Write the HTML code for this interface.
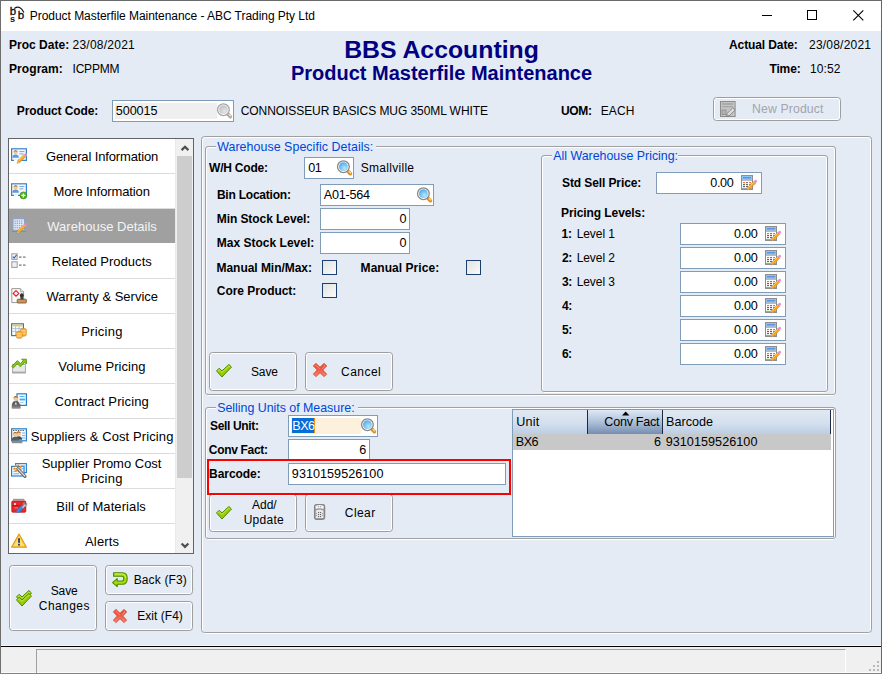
<!DOCTYPE html>
<html lang="en"><head><meta charset="utf-8"><title>Product Masterfile Maintenance</title><style>
html,body{margin:0;padding:0}
body{width:882px;height:674px;overflow:hidden;position:relative;background:#e4ebf5;font-family:"Liberation Sans",sans-serif;font-size:12px;color:#000}
.a,.t,.inp,.chk,.btn{position:absolute;box-sizing:content-box}
.t{white-space:nowrap}
.inp{border:1px solid #7f9db9;background:#fff}
.chk{border:1px solid #1c3f72;background:linear-gradient(135deg,#e2e2e0,#fafafa)}
.btn{border:1px solid #9e9e9e;border-radius:3.5px;box-shadow:inset 0 0 0 1px #fff;background:#e4ebf5}
svg{display:block;overflow:visible}
</style></head><body>
<div class="a" style="left:0;top:0;width:882px;height:1px;background:#6a6a6a"></div>
<div class="a" style="left:1px;top:1px;width:880px;height:30px;background:#fff"></div>
<svg class="a" style="left:8px;top:5px;opacity:0.999" width="20" height="20" viewBox="0 0 20 20"><text x="1.5" y="10" font-family="Liberation Mono, monospace" font-size="11.5" fill="#111" stroke="#111" stroke-width="0.35">b</text><text x="9.4" y="14" font-family="Liberation Mono, monospace" font-size="11.5" fill="#111" stroke="#111" stroke-width="0.35">b</text><text x="1.7" y="17.1" font-family="Liberation Mono, monospace" font-size="9.2" font-weight="bold" fill="#111">s</text><path d="M6.3 3.5 Q12.2 -0.6 15.9 7.6" fill="none" stroke="#111" stroke-width="1.2"/></svg>
<div class="t" style="left:29.84px;top:8px;font-size:12px;line-height:16px;letter-spacing:-0.048px;">Product Masterfile Maintenance - ABC Trading Pty Ltd</div>
<div class="a" style="left:762px;top:15px;width:10px;height:1px;background:#000"></div>
<div class="a" style="left:807px;top:10px;width:8px;height:8px;border:1px solid #000"></div>
<svg class="a" style="left:853px;top:10px;" width="11" height="11" viewBox="0 0 11 11"><path d="M0.3 0.3 L10.3 10.3 M10.3 0.3 L0.3 10.3" stroke="#000" stroke-width="1.1"/></svg>
<div class="t" style="left:9.02px;top:37px;font-size:12px;line-height:16px;letter-spacing:0.013px;font-weight:bold;">Proc Date:</div>
<div class="t" style="left:72.50px;top:37px;font-size:12px;line-height:16px;letter-spacing:0.246px;">23/08/2021</div>
<div class="t" style="left:9.02px;top:61px;font-size:12px;line-height:16px;letter-spacing:0.069px;font-weight:bold;">Program:</div>
<div class="t" style="left:72.52px;top:61px;font-size:12px;line-height:16px;letter-spacing:-0.212px;">ICPPMM</div>
<div class="t" style="left:0.00px;top:35px;font-size:24.8px;line-height:30px;font-weight:bold;color:#000080;width:883px;text-align:center;">BBS Accounting</div>
<div class="t" style="left:0.00px;top:61px;font-size:20px;line-height:24px;font-weight:bold;color:#000080;width:883px;text-align:center;">Product Masterfile Maintenance</div>
<div class="t" style="left:729.00px;top:37px;font-size:12px;line-height:16px;letter-spacing:-0.107px;font-weight:bold;">Actual Date:</div>
<div class="t" style="left:809.00px;top:37px;font-size:12px;line-height:16px;letter-spacing:0.212px;">23/08/2021</div>
<div class="t" style="left:769.38px;top:61px;font-size:12px;line-height:16px;letter-spacing:-0.102px;font-weight:bold;">Time:</div>
<div class="t" style="left:810.00px;top:61px;font-size:12px;line-height:16px;letter-spacing:0.110px;">10:52</div>
<div class="t" style="left:16.82px;top:103px;font-size:12px;line-height:16px;letter-spacing:-0.102px;font-weight:bold;">Product Code:</div>
<div class="inp" style="left:112px;top:100px;width:120px;height:20px"></div><div class="a" style="left:115px;top:103px;width:102px;height:16px;background:#efefef"></div>
<div class="t" style="left:115.80px;top:103px;font-size:12.6px;line-height:16px;letter-spacing:-0.083px;">500015</div>
<svg class="a" style="left:217px;top:103px;" width="16" height="16" viewBox="0 0 16 16"><radialGradient id="lg217103" cx="0.62" cy="0.68" r="0.75"><stop offset="0" stop-color="#e2e4e8"/><stop offset="1" stop-color="#bcbfc4"/></radialGradient><path d="M10.8 11 L13.4 13.7" stroke="#b4aca0" stroke-width="3.6" stroke-linecap="round"/><path d="M12 11.4 L13.6 13" stroke="#e8e4dc" stroke-width="1.1" stroke-linecap="round"/><circle cx="6.4" cy="6.7" r="5.85" fill="#fff" stroke="#a6a6a6" stroke-width="1.35"/><circle cx="6.4" cy="6.7" r="4.4" fill="url(#lg217103)"/></svg>
<div class="t" style="left:240.70px;top:103px;font-size:12px;line-height:16px;letter-spacing:-0.069px;">CONNOISSEUR BASICS MUG 350ML WHITE</div>
<div class="t" style="left:561.08px;top:103px;font-size:12px;line-height:16px;letter-spacing:-0.373px;font-weight:bold;">UOM:</div>
<div class="t" style="left:600.74px;top:103px;font-size:12px;line-height:16px;letter-spacing:0.097px;">EACH</div>
<div class="btn" style="left:713px;top:97px;width:126px;height:22px;"></div>
<svg class="a" style="left:720px;top:100.5px;" width="16" height="16" viewBox="0 0 16 16"><rect x="0.5" y="0.5" width="14.6" height="15" fill="#c4c4c4" stroke="#8c8c8c"/><rect x="2" y="2.4" width="11" height="1.2" fill="#9a9a9a"/><rect x="2" y="5" width="11" height="1.2" fill="#a6a6a6"/><rect x="2" y="9" width="4" height="4.6" fill="#b4b4b4" stroke="#8c8c8c" stroke-width="0.8"/><path d="M6.6 15 L7.2 12.4 L12.8 6.8 L15.2 9 L9.4 14.6 Z" fill="#dcdcdc" stroke="#777" stroke-width="0.8"/></svg>
<div class="t" style="left:752.02px;top:101px;font-size:12.3px;line-height:16px;letter-spacing:0.103px;color:#a4a4a9;">New Product</div>
<div class="a" style="left:8px;top:138px;width:184px;height:414px;border:1px solid #646464;background:#fff;overflow:hidden" id="side">
<div class="a" style="left:0;top:0px;width:166px;height:34px;border-bottom:1px solid #dcdcdc;"></div>
<svg class="a" style="left:2px;top:9px" width="16" height="16" viewBox="0 0 16 16"><rect x="0.6" y="0.8" width="14.8" height="11.6" fill="#f2f8fe" stroke="#3a82c8" stroke-width="1.2"/><circle cx="4.6" cy="4.4" r="2.07" fill="#f3c79a"/><path d="M2.2599999999999993 3.8600000000000003 Q4.6 0.43999999999999995 6.9399999999999995 3.8600000000000003 Q4.6 2.6000000000000005 2.2599999999999993 3.8600000000000003Z" fill="#9a5a1c"/><path d="M1.3599999999999994 9.8 Q1.3599999999999994 6.5600000000000005 4.6 6.5600000000000005 Q7.84 6.5600000000000005 7.84 9.8Z" fill="#5a9ae0"/><rect x="8.4" y="3" width="5" height="1.1" fill="#7aaee6"/><rect x="8.4" y="5.4" width="4" height="1" fill="#a0a0a0"/><path d="M3 11.4 H7 V13 H3Z" fill="#fff"/><g transform="translate(0,0)"><path d="M6.1 15.3 L6.9 12.6 L12.9 6.6 L14.8 8.5 L8.8 14.5 Z" fill="#f7a21b" stroke="#c9781a" stroke-width="0.5"/><path d="M7.6 12.8 L13.2 7.3" stroke="#ffd468" stroke-width="0.9"/><path d="M12.9 6.6 L14 5.5 Q14.9 4.8 15.7 5.6 Q16.4 6.4 15.8 7.4 L14.8 8.5 Z" fill="#e88ad2"/><path d="M12.5 7 L14.4 8.9" stroke="#c4c4c4" stroke-width="0.9"/><path d="M6.1 15.3 L6.7 13.2 L8.2 14.7 Z" fill="#ecd0a8"/><path d="M6.1 15.3 L6.35 14.4 L7 15.05Z" fill="#555"/></g></svg>
<div class="t" style="left:36.95px;top:10px;font-size:13px;line-height:16px;letter-spacing:-0.140px;">General Information</div>
<div class="a" style="left:0;top:35px;width:166px;height:34px;border-bottom:1px solid #dcdcdc;"></div>
<svg class="a" style="left:2px;top:44px" width="16" height="16" viewBox="0 0 16 16"><rect x="0.6" y="0.8" width="14.8" height="11.6" fill="#f2f8fe" stroke="#3a82c8" stroke-width="1.2"/><circle cx="4.6" cy="4.4" r="2.07" fill="#f3c79a"/><path d="M2.2599999999999993 3.8600000000000003 Q4.6 0.43999999999999995 6.9399999999999995 3.8600000000000003 Q4.6 2.6000000000000005 2.2599999999999993 3.8600000000000003Z" fill="#9a5a1c"/><path d="M1.3599999999999994 9.8 Q1.3599999999999994 6.5600000000000005 4.6 6.5600000000000005 Q7.84 6.5600000000000005 7.84 9.8Z" fill="#5a9ae0"/><rect x="8.4" y="3" width="5" height="1.1" fill="#7aaee6"/><rect x="8.4" y="5.4" width="4" height="1" fill="#a0a0a0"/><path d="M3 11.4 H7 V13 H3Z" fill="#fff"/><circle cx="12.4" cy="12.4" r="3.5" fill="#4fb31c" stroke="#2e8a0a" stroke-width="0.6"/><path d="M12.4 10.4 V14.4 M10.4 12.4 H14.4" stroke="#fff" stroke-width="1.4"/></svg>
<div class="t" style="left:44.46px;top:45px;font-size:13px;line-height:16px;letter-spacing:-0.120px;">More Information</div>
<div class="a" style="left:0;top:70px;width:166px;height:34px;border-bottom:1px solid #fff;background:#a0a0a0;"></div>
<svg class="a" style="left:2px;top:79px" width="16" height="16" viewBox="0 0 16 16"><path d="M0.4 13.8 Q2 11.6 4 12.4 H12 Q14 11.6 15.6 13.8Z" fill="#6aaa2a"/><rect x="2" y="0.8" width="11.4" height="11.4" fill="#e8eef8" stroke="#7f9fd0" stroke-width="1"/><rect x="3.4" y="2.4" width="1.4" height="1.4" fill="#8fa8dc"/><rect x="3.4" y="4.6" width="1.4" height="1.4" fill="#8fa8dc"/><rect x="3.4" y="6.800000000000001" width="1.4" height="1.4" fill="#8fa8dc"/><rect x="3.4" y="9.0" width="1.4" height="1.4" fill="#8fa8dc"/><rect x="5.6" y="2.4" width="1.4" height="1.4" fill="#8fa8dc"/><rect x="5.6" y="4.6" width="1.4" height="1.4" fill="#8fa8dc"/><rect x="5.6" y="6.800000000000001" width="1.4" height="1.4" fill="#8fa8dc"/><rect x="5.6" y="9.0" width="1.4" height="1.4" fill="#8fa8dc"/><rect x="7.800000000000001" y="2.4" width="1.4" height="1.4" fill="#8fa8dc"/><rect x="7.800000000000001" y="4.6" width="1.4" height="1.4" fill="#8fa8dc"/><rect x="7.800000000000001" y="6.800000000000001" width="1.4" height="1.4" fill="#8fa8dc"/><rect x="7.800000000000001" y="9.0" width="1.4" height="1.4" fill="#8fa8dc"/><rect x="10.0" y="2.4" width="1.4" height="1.4" fill="#8fa8dc"/><rect x="10.0" y="4.6" width="1.4" height="1.4" fill="#8fa8dc"/><rect x="10.0" y="6.800000000000001" width="1.4" height="1.4" fill="#8fa8dc"/><rect x="10.0" y="9.0" width="1.4" height="1.4" fill="#8fa8dc"/><g transform="translate(0,0)"><path d="M6.1 15.3 L6.9 12.6 L12.9 6.6 L14.8 8.5 L8.8 14.5 Z" fill="#f7a21b" stroke="#c9781a" stroke-width="0.5"/><path d="M7.6 12.8 L13.2 7.3" stroke="#ffd468" stroke-width="0.9"/><path d="M12.9 6.6 L14 5.5 Q14.9 4.8 15.7 5.6 Q16.4 6.4 15.8 7.4 L14.8 8.5 Z" fill="#e88ad2"/><path d="M12.5 7 L14.4 8.9" stroke="#c4c4c4" stroke-width="0.9"/><path d="M6.1 15.3 L6.7 13.2 L8.2 14.7 Z" fill="#ecd0a8"/><path d="M6.1 15.3 L6.35 14.4 L7 15.05Z" fill="#555"/></g></svg>
<div class="t" style="left:38.27px;top:80px;font-size:13px;line-height:16px;letter-spacing:0.014px;color:#f4f4f4;">Warehouse Details</div>
<div class="a" style="left:0;top:105px;width:166px;height:34px;border-bottom:1px solid #dcdcdc;"></div>
<svg class="a" style="left:2px;top:114px" width="16" height="16" viewBox="0 0 16 16"><rect x="0.8" y="0.8" width="5.4" height="5.6" fill="#f4f4f4" stroke="#9a9a9a"/><path d="M1.8 3.6 L3.2 5 L5.6 1.8" stroke="#2a6ae0" stroke-width="1.2" fill="none"/><rect x="0.8" y="8.8" width="5.4" height="5.6" fill="#f0f0f4" stroke="#9a9a9a"/><rect x="8" y="3.4" width="2.6" height="1.4" fill="#8a8a8a"/><rect x="12" y="3.4" width="2.6" height="1.4" fill="#8a8a8a"/><rect x="8" y="11.4" width="2.6" height="1.4" fill="#8a8a8a"/><rect x="12" y="11.4" width="2.6" height="1.4" fill="#8a8a8a"/></svg>
<div class="t" style="left:42.76px;top:115px;font-size:13px;line-height:16px;letter-spacing:0.019px;">Related Products</div>
<div class="a" style="left:0;top:140px;width:166px;height:34px;border-bottom:1px solid #dcdcdc;"></div>
<svg class="a" style="left:2px;top:149px" width="16" height="16" viewBox="0 0 16 16"><path d="M0.8 0.6 H9.4 L12.6 3.8 V14.6 H0.8Z" fill="#fafafa" stroke="#9a9a9a"/><path d="M9.4 0.6 V3.8 H12.6" fill="#e8e8e8" stroke="#9a9a9a" stroke-width="0.8"/><path d="M5 2.6 L7.8 5.4 L5 8.2 L2.2 5.4Z" fill="none" stroke="#e02020" stroke-width="1.1"/><rect x="6.2" y="11.2" width="9.2" height="3.8" rx="0.8" fill="#c8955a" stroke="#7a5226" stroke-width="0.8"/><rect x="9.4" y="7.6" width="2.8" height="4" fill="#444"/><circle cx="10.8" cy="7.2" r="1.9" fill="#333"/></svg>
<div class="t" style="left:37.47px;top:150px;font-size:13px;line-height:16px;letter-spacing:0.006px;">Warranty &amp; Service</div>
<div class="a" style="left:0;top:175px;width:166px;height:34px;border-bottom:1px solid #dcdcdc;"></div>
<svg class="a" style="left:2px;top:184px" width="16" height="16" viewBox="0 0 16 16"><rect x="0.6" y="0.8" width="11.8" height="11.8" fill="#fff" stroke="#2a80c8" stroke-width="1.2"/><rect x="1.4" y="1.6" width="10.2" height="1.8" fill="#f6c640"/><path d="M1.4 5.6 H11.6 M1.4 8.4 H11.6 M4.6 3.4 V12 M8 3.4 V12" stroke="#9abce0" stroke-width="0.9"/><rect x="9.6" y="5.6" width="5.8" height="7.4" rx="1.6" fill="#f9b040" stroke="#d8861a" stroke-width="0.7"/><path d="M9.8 8 H15.2 M9.8 10.4 H15.2" stroke="#fde0a0" stroke-width="0.9"/><rect x="5.4" y="8.6" width="5.8" height="6.6" rx="1.6" fill="#f9b040" stroke="#d8861a" stroke-width="0.7"/><path d="M5.6 10.8 H11 M5.6 13 H11" stroke="#fde0a0" stroke-width="0.9"/></svg>
<div class="t" style="left:72.16px;top:185px;font-size:13px;line-height:16px;letter-spacing:0.256px;">Pricing</div>
<div class="a" style="left:0;top:210px;width:166px;height:34px;border-bottom:1px solid #dcdcdc;"></div>
<svg class="a" style="left:2px;top:219px" width="16" height="16" viewBox="0 0 16 16"><rect x="1.6" y="6.4" width="12.8" height="8.6" fill="#fcfcfc" stroke="#a8a8a8"/><path d="M2 9 H14 M2 11 H14 M2 13 H14" stroke="#cfcfcf" stroke-width="0.9"/><rect x="1.6" y="13.6" width="12.8" height="1.4" fill="#a8a8a8"/><path d="M0.8 8.4 L6.4 2.6 L9.4 5.6 L12.2 2.8 L10.6 1.2 H15.4 V6 L13.8 4.4 L9.4 8.8 L6.4 5.8 L2.6 9.8 Z" fill="#8cc818" stroke="#4e8c00" stroke-width="0.8" stroke-linejoin="round"/></svg>
<div class="t" style="left:49.17px;top:220px;font-size:13px;line-height:16px;letter-spacing:0.041px;">Volume Pricing</div>
<div class="a" style="left:0;top:245px;width:166px;height:34px;border-bottom:1px solid #dcdcdc;"></div>
<svg class="a" style="left:2px;top:254px" width="16" height="16" viewBox="0 0 16 16"><rect x="6" y="0.8" width="9.4" height="11.6" fill="#f4faff" stroke="#2a80c8" stroke-width="1.2"/><rect x="8.6" y="3" width="5" height="1" fill="#58b8f0"/><rect x="8.6" y="5.6" width="5.4" height="1.8" fill="#38b0f0"/><rect x="8.6" y="9" width="4" height="0.9" fill="#a8c8e8"/><circle cx="4.8" cy="5.6" r="2.415" fill="#f3c79a"/><path d="M2.0699999999999994 4.97 Q4.8 0.9799999999999986 7.53 4.97 Q4.8 3.4999999999999996 2.0699999999999994 4.97Z" fill="#9a5a1c"/><path d="M1.0199999999999996 11.9 Q1.0199999999999996 8.12 4.8 8.12 Q8.58 8.12 8.58 11.9Z" fill="#5a5a5a"/><rect x="0.8" y="11" width="8.6" height="4.4" fill="#6a6a6a"/><path d="M4.9 8.4 L4 11.4 H5.8Z" fill="#fff"/><rect x="0.8" y="13.6" width="8.6" height="1.8" fill="#8a8a8a"/></svg>
<div class="t" style="left:45.55px;top:255px;font-size:13px;line-height:16px;letter-spacing:0.120px;">Contract Pricing</div>
<div class="a" style="left:0;top:280px;width:166px;height:34px;border-bottom:1px solid #dcdcdc;"></div>
<svg class="a" style="left:2px;top:289px" width="16" height="16" viewBox="0 0 16 16"><rect x="0.6" y="0.8" width="14.8" height="12" fill="#f4faff" stroke="#2a80c8" stroke-width="1.2"/><path d="M2 2.4 H14" stroke="#555" stroke-width="1" stroke-dasharray="1.4 1"/><path d="M11 5 H14 M11 7.6 H14 M11 10 H14" stroke="#7ab0e8" stroke-width="1"/><circle cx="7.6" cy="5.8" r="2.3" fill="#f3c79a"/><path d="M5.0 5.2 Q7.6 1.3999999999999995 10.2 5.2 Q7.6 3.8 5.0 5.2Z" fill="#9a5a1c"/><path d="M3.9999999999999996 11.8 Q3.9999999999999996 8.2 7.6 8.2 Q11.2 8.2 11.2 11.8Z" fill="#4a4a4a"/><circle cx="4.2" cy="6.4" r="2.3" fill="#f3c79a"/><path d="M1.6 5.800000000000001 Q4.2 2.0 6.800000000000001 5.800000000000001 Q4.2 4.4 1.6 5.800000000000001Z" fill="#9a5a1c"/><path d="M0.6000000000000001 12.4 Q0.6000000000000001 8.8 4.2 8.8 Q7.800000000000001 8.8 7.800000000000001 12.4Z" fill="#5c5c5c"/><rect x="0.8" y="13" width="10.6" height="2.2" fill="#8a8a8a"/></svg>
<div class="t" style="left:21.81px;top:290px;font-size:13px;line-height:16px;letter-spacing:0.105px;">Suppliers &amp; Cost Pricing</div>
<div class="a" style="left:0;top:315px;width:166px;height:34px;border-bottom:1px solid #dcdcdc;"></div>
<svg class="a" style="left:2px;top:324px" width="16" height="16" viewBox="0 0 16 16"><rect x="4.6" y="0.6" width="10.8" height="9" fill="#eef6fe" stroke="#2a80c8" stroke-width="1.1"/><rect x="0.6" y="3.4" width="12.4" height="9.6" fill="#f4faff" stroke="#2a80c8" stroke-width="1.2"/><path d="M2.4 6 H5 M2.4 8.4 H5 M2.4 10.8 H8 M10 3 H14 M10.6 5.6 H14" stroke="#6ab0ec" stroke-width="1"/><circle cx="6.6" cy="5.4" r="3" fill="none" stroke="#f78a14" stroke-width="2" stroke-dasharray="1.7 1"/><path d="M6.8 5.8 L14 13.4" stroke="#6a6a6a" stroke-width="3.2" stroke-linecap="round"/><path d="M6.8 5.6 L13.8 13" stroke="#d8d8d8" stroke-width="1.3" stroke-linecap="round"/></svg>
<div class="t" style="left:32.71px;top:317px;font-size:13px;line-height:16px;letter-spacing:-0.010px;">Supplier Promo Cost</div>
<div class="t" style="left:72.16px;top:332px;font-size:13px;line-height:16px;letter-spacing:0.256px;">Pricing</div>
<div class="a" style="left:0;top:350px;width:166px;height:34px;border-bottom:1px solid #dcdcdc;"></div>
<svg class="a" style="left:2px;top:359px" width="16" height="16" viewBox="0 0 16 16"><rect x="2" y="0.8" width="11.4" height="1.6" fill="#9a9a9a"/><rect x="0.8" y="3" width="14" height="11.2" rx="1" fill="#e22a2a" stroke="#b81818" stroke-width="0.8"/><rect x="0.8" y="7.2" width="14" height="1.2" fill="#b81818"/><circle cx="4" cy="6" r="1" fill="#fff"/><rect x="3.4" y="9.4" width="3.6" height="1" fill="#f48080"/><path d="M7 13.4 L11.6 8.4" stroke="#2a8af0" stroke-width="3.2" stroke-linecap="round"/><path d="M10.6 9.4 L12.6 7.2 Q11.6 4.8 13.8 4 L13.2 6 L14.6 6.8 L15.8 5.4 Q16.4 8 13.8 8.6 L12 10.6Z" fill="#d0d0d0" stroke="#7a7a7a" stroke-width="0.6"/></svg>
<div class="t" style="left:47.36px;top:360px;font-size:13px;line-height:16px;letter-spacing:0.085px;">Bill of Materials</div>
<div class="a" style="left:0;top:385px;width:166px;height:34px;border-bottom:1px solid #dcdcdc;"></div>
<svg class="a" style="left:2px;top:394px" width="16" height="16" viewBox="0 0 16 16"><path d="M8 1 L15.4 14.2 H0.6Z" fill="#fcd34a" stroke="#e09a1a" stroke-width="1.2" stroke-linejoin="round"/><path d="M8 3.4 L13.2 13 H2.8Z" fill="#fde67a" opacity="0.7"/><rect x="7.1" y="5.2" width="1.8" height="4.6" fill="#2a3a6a"/><rect x="7.1" y="10.8" width="1.8" height="1.8" fill="#2a3a6a"/></svg>
<div class="t" style="left:76.00px;top:395px;font-size:13px;line-height:16px;letter-spacing:0.168px;">Alerts</div>
<div class="a" style="left:167px;top:0;width:17px;height:414px;background:#f0f0f0"></div>
<div class="a" style="left:166px;top:0;width:1px;height:414px;background:#e9e9e9"></div>
<div class="a" style="left:168px;top:17px;width:15px;height:322px;background:#cdcdcd"></div>
<svg class="a" style="left:170.5px;top:4.7px;" width="10" height="8" viewBox="0 0 10 8"><path d="M1.6 6.1 L5 2.7 L8.4 6.1" fill="none" stroke="#4e4e4e" stroke-width="2.2"/></svg>
<svg class="a" style="left:170.5px;top:401.7px;" width="10" height="8" viewBox="0 0 10 8"><path d="M1.6 2.5 L5 5.9 L8.4 2.5" fill="none" stroke="#4e4e4e" stroke-width="2.2"/></svg>
</div>
<div class="btn" style="left:9px;top:565px;width:86px;height:64px;"></div>
<svg class="a" style="left:16px;top:590px;" width="16" height="14" viewBox="0 0 16 14"><path d="M0.5 6.9 L3.1 4.3 L6 6.9 L12.9 0.5 L15.5 3 L6 13 Z" fill="#98cc0a" stroke="#4e8a00" stroke-width="1" stroke-linejoin="round"/><path d="M2 6.8 L3.2 5.7 L6 8.3 L12.9 2 L13.9 3" fill="none" stroke="#c8ea4a" stroke-width="1" stroke-linecap="round" stroke-linejoin="round"/></svg>
<svg class="a" style="left:16px;top:593px;" width="16" height="14" viewBox="0 0 16 14"><path d="M0.5 6.9 L3.1 4.3 L6 6.9 L12.9 0.5 L15.5 3 L6 13 Z" fill="#98cc0a" stroke="#4e8a00" stroke-width="1" stroke-linejoin="round"/><path d="M2 6.8 L3.2 5.7 L6 8.3 L12.9 2 L13.9 3" fill="none" stroke="#c8ea4a" stroke-width="1" stroke-linecap="round" stroke-linejoin="round"/></svg>
<div class="t" style="left:50.66px;top:583px;font-size:12px;line-height:16px;letter-spacing:-0.093px;">Save</div>
<div class="t" style="left:38.80px;top:598px;font-size:12px;line-height:16px;letter-spacing:0.432px;">Changes</div>
<div class="btn" style="left:105px;top:565px;width:86px;height:28px;"></div>
<svg class="a" style="left:112px;top:572px;" width="16" height="16" viewBox="0 0 16 16"><path d="M1.6 0.8 H10.5 Q15.2 0.8 15.2 6.4 Q15.2 12.2 10.5 12.2 H5.2 V14.6 L0.6 10.6 L5.2 6.6 V9 H10 Q11.8 9 11.8 6.4 Q11.8 4.2 10 4.2 H1.6 Z" fill="#a7da10" stroke="#4b8c00" stroke-width="1.1" stroke-linejoin="round"/><path d="M2.6 2.1 H10.5 Q13.6 2.3 13.9 6" fill="none" stroke="#d4f060" stroke-width="1"/></svg>
<div class="t" style="left:133.64px;top:572px;font-size:12px;line-height:16px;letter-spacing:0.149px;">Back (F3)</div>
<div class="btn" style="left:105px;top:601px;width:86px;height:28px;"></div>
<svg class="a" style="left:113px;top:608.5px;" width="14" height="14" viewBox="0 0 14 14"><linearGradient id="xg113608" x1="0" y1="0" x2="0" y2="1"><stop offset="0" stop-color="#e4452a"/><stop offset="0.45" stop-color="#f05c44"/><stop offset="1" stop-color="#f6867a"/></linearGradient><path d="M0.4 2.9 L2.9 0.4 L7 4.3 L11.1 0.4 L13.6 2.9 L9.7 7 L13.6 11.1 L11.1 13.6 L7 9.7 L2.9 13.6 L0.4 11.1 L4.3 7 Z" fill="url(#xg113608)" stroke="#d8442a" stroke-width="0.9" stroke-linejoin="round"/><path d="M2.2 3 L3 2.2 L6.4 5.6 M11 2.2 L11.8 3 L9.4 5.4" stroke="#f9a08e" stroke-width="0.9" fill="none" stroke-linecap="round"/></svg>
<div class="t" style="left:137.34px;top:608px;font-size:12px;line-height:16px;letter-spacing:0.019px;">Exit (F4)</div>
<div class="a" style="left:202px;top:137px;width:667px;height:495px;border:1px solid #fff;border-radius:3.5px"></div><div class="a" style="left:201px;top:136px;width:669px;height:495px;border:1px solid #a0a0a0;border-radius:3.5px"></div>
<div class="a" style="left:206px;top:147px;width:627px;height:247px;border:1px solid #fff;border-radius:3px"></div><div class="a" style="left:205px;top:146px;width:629px;height:247px;border:1px solid #a0a0a0;border-radius:3px"></div>
<div class="a" style="left:216px;top:140px;width:160px;height:14px;background:#e4ebf5"></div>
<div class="t" style="left:217.17px;top:139px;font-size:12.4px;line-height:16px;letter-spacing:0.060px;color:#0046d5;">Warehouse Specific Details:</div>
<div class="t" style="left:209.10px;top:160px;font-size:12px;line-height:16px;letter-spacing:-0.227px;font-weight:bold;">W/H Code:</div>
<div class="inp" style="left:304px;top:157px;width:48px;height:20px"></div>
<div class="t" style="left:308.13px;top:160px;font-size:12.6px;line-height:16px;letter-spacing:-0.450px;">01</div>
<svg class="a" style="left:337px;top:160px;" width="16" height="16" viewBox="0 0 16 16"><radialGradient id="lg337160" cx="0.62" cy="0.68" r="0.75"><stop offset="0" stop-color="#b4e8fb"/><stop offset="1" stop-color="#48a4ee"/></radialGradient><path d="M10.8 11 L13.4 13.7" stroke="#e0901a" stroke-width="3.6" stroke-linecap="round"/><path d="M12 11.4 L13.6 13" stroke="#fbe0a8" stroke-width="1.1" stroke-linecap="round"/><circle cx="6.4" cy="6.7" r="5.85" fill="#fff" stroke="#8a8a8a" stroke-width="1.35"/><circle cx="6.4" cy="6.7" r="4.4" fill="url(#lg337160)"/></svg>
<div class="t" style="left:360.76px;top:160px;font-size:12px;line-height:16px;letter-spacing:0.287px;">Smallville</div>
<div class="t" style="left:216.92px;top:187px;font-size:12px;line-height:16px;letter-spacing:-0.219px;font-weight:bold;">Bin Location:</div>
<div class="inp" style="left:320px;top:184px;width:112px;height:20px"></div>
<div class="t" style="left:323.80px;top:187px;font-size:12.6px;line-height:16px;letter-spacing:-0.214px;">A01-564</div>
<svg class="a" style="left:417px;top:187px;" width="16" height="16" viewBox="0 0 16 16"><radialGradient id="lg417187" cx="0.62" cy="0.68" r="0.75"><stop offset="0" stop-color="#b4e8fb"/><stop offset="1" stop-color="#48a4ee"/></radialGradient><path d="M10.8 11 L13.4 13.7" stroke="#e0901a" stroke-width="3.6" stroke-linecap="round"/><path d="M12 11.4 L13.6 13" stroke="#fbe0a8" stroke-width="1.1" stroke-linecap="round"/><circle cx="6.4" cy="6.7" r="5.85" fill="#fff" stroke="#8a8a8a" stroke-width="1.35"/><circle cx="6.4" cy="6.7" r="4.4" fill="url(#lg417187)"/></svg>
<div class="t" style="left:216.72px;top:211px;font-size:12px;line-height:16px;letter-spacing:-0.071px;font-weight:bold;">Min Stock Level:</div>
<div class="inp" style="left:320px;top:208px;width:88px;height:20px"></div>
<div class="t" style="left:399.48px;top:211px;font-size:12.6px;line-height:16px;">0</div>
<div class="t" style="left:216.72px;top:235px;font-size:12px;line-height:16px;letter-spacing:0.016px;font-weight:bold;">Max Stock Level:</div>
<div class="inp" style="left:320px;top:232px;width:88px;height:20px"></div>
<div class="t" style="left:399.48px;top:235px;font-size:12.6px;line-height:16px;">0</div>
<div class="t" style="left:216.52px;top:260px;font-size:12px;line-height:16px;letter-spacing:-0.041px;font-weight:bold;">Manual Min/Max:</div>
<div class="chk" style="left:322px;top:260px;width:13px;height:13px;"></div>
<div class="t" style="left:360.62px;top:260px;font-size:12px;line-height:16px;letter-spacing:0.041px;font-weight:bold;">Manual Price:</div>
<div class="chk" style="left:466px;top:260px;width:13px;height:13px;"></div>
<div class="t" style="left:216.82px;top:283px;font-size:12px;line-height:16px;letter-spacing:-0.041px;font-weight:bold;">Core Product:</div>
<div class="chk" style="left:322px;top:283px;width:13px;height:13px;"></div>
<div class="btn" style="left:209px;top:352px;width:86px;height:37px;"></div>
<svg class="a" style="left:216px;top:364px;" width="16" height="14" viewBox="0 0 16 14"><path d="M0.5 6.9 L3.1 4.3 L6 6.9 L12.9 0.5 L15.5 3 L6 13 Z" fill="#98cc0a" stroke="#4e8a00" stroke-width="1" stroke-linejoin="round"/><path d="M2 6.8 L3.2 5.7 L6 8.3 L12.9 2 L13.9 3" fill="none" stroke="#c8ea4a" stroke-width="1" stroke-linecap="round" stroke-linejoin="round"/></svg>
<div class="t" style="left:250.96px;top:364px;font-size:12px;line-height:16px;letter-spacing:-0.093px;">Save</div>
<div class="btn" style="left:305px;top:352px;width:86px;height:37px;"></div>
<svg class="a" style="left:313px;top:363px;" width="14" height="14" viewBox="0 0 14 14"><linearGradient id="xg313363" x1="0" y1="0" x2="0" y2="1"><stop offset="0" stop-color="#e4452a"/><stop offset="0.45" stop-color="#f05c44"/><stop offset="1" stop-color="#f6867a"/></linearGradient><path d="M0.4 2.9 L2.9 0.4 L7 4.3 L11.1 0.4 L13.6 2.9 L9.7 7 L13.6 11.1 L11.1 13.6 L7 9.7 L2.9 13.6 L0.4 11.1 L4.3 7 Z" fill="url(#xg313363)" stroke="#d8442a" stroke-width="0.9" stroke-linejoin="round"/><path d="M2.2 3 L3 2.2 L6.4 5.6 M11 2.2 L11.8 3 L9.4 5.4" stroke="#f9a08e" stroke-width="0.9" fill="none" stroke-linecap="round"/></svg>
<div class="t" style="left:341.10px;top:364px;font-size:12px;line-height:16px;letter-spacing:0.450px;">Cancel</div>
<div class="a" style="left:542px;top:156px;width:283px;height:235px;border:1px solid #fff;border-radius:3px"></div><div class="a" style="left:541px;top:155px;width:285px;height:235px;border:1px solid #a0a0a0;border-radius:3px"></div>
<div class="a" style="left:552px;top:149px;width:126px;height:14px;background:#e4ebf5"></div>
<div class="t" style="left:553.20px;top:148px;font-size:12.4px;line-height:16px;color:#0046d5;">All Warehouse Pricing:</div>
<div class="t" style="left:561.97px;top:175px;font-size:12px;line-height:16px;letter-spacing:-0.095px;font-weight:bold;">Std Sell Price:</div>
<div class="inp" style="left:656px;top:172px;width:104px;height:20px"></div>
<div class="t" style="left:710.13px;top:175px;font-size:12.6px;line-height:16px;letter-spacing:-0.254px;">0.00</div>
<svg class="a" style="left:741px;top:175px;" width="16" height="16" viewBox="0 0 16 16"><rect x="0.5" y="0.5" width="11" height="14" fill="#fff" stroke="#8e8e8e"/><rect x="1" y="1" width="10" height="3.6" fill="#8cc4f8"/><rect x="2" y="2.2" width="8" height="1.2" fill="#4a90e0"/><rect x="0.5" y="4.6" width="11" height="1" fill="#8e8e8e"/><rect x="2" y="7" width="2" height="1.2" fill="#ff6a13"/><rect x="5" y="7" width="2" height="1.2" fill="#777"/><rect x="8" y="7" width="2" height="1.2" fill="#ff6a13"/><rect x="2" y="9" width="2" height="1.2" fill="#666"/><rect x="5" y="9" width="2" height="1.2" fill="#666"/><rect x="8" y="9" width="2" height="1.2" fill="#4a90e0"/><rect x="2" y="11" width="2" height="1.2" fill="#666"/><rect x="5" y="11" width="2" height="1.2" fill="#666"/><rect x="0.5" y="13.2" width="11" height="1.3" fill="#8e8e8e"/><path d="M6.1 14.9 L6.9 12.2 L12.9 6.2 L14.8 8.1 L8.8 14.1 Z" fill="#f7a21b" stroke="#c9781a" stroke-width="0.5"/><path d="M7.6 12.4 L13.2 6.9" stroke="#ffd468" stroke-width="0.9"/><path d="M12.9 6.2 L14 5.1 Q14.9 4.4 15.7 5.2 Q16.4 6 15.8 7 L14.8 8.1 Z" fill="#e88ad2"/><path d="M12.5 6.6 L14.4 8.5" stroke="#b8b8b8" stroke-width="0.9"/><path d="M6.1 14.9 L6.7 12.8 L8.2 14.3 Z" fill="#ecd0a8"/><path d="M6.1 14.9 L6.35 14 L7 14.65Z" fill="#555"/></svg>
<div class="t" style="left:561.02px;top:205px;font-size:12px;line-height:16px;letter-spacing:-0.088px;font-weight:bold;">Pricing Levels:</div>
<div class="t" style="left:561.55px;top:226px;font-size:12px;line-height:16px;letter-spacing:-0.160px;font-weight:bold;">1:</div>
<div class="t" style="left:576.64px;top:226px;font-size:12px;line-height:16px;letter-spacing:-0.057px;">Level 1</div>
<div class="inp" style="left:680px;top:223px;width:104px;height:20px"></div>
<div class="t" style="left:733.93px;top:226px;font-size:12.6px;line-height:16px;letter-spacing:-0.187px;">0.00</div>
<svg class="a" style="left:765px;top:226px;" width="16" height="16" viewBox="0 0 16 16"><rect x="0.5" y="0.5" width="11" height="14" fill="#fff" stroke="#8e8e8e"/><rect x="1" y="1" width="10" height="3.6" fill="#8cc4f8"/><rect x="2" y="2.2" width="8" height="1.2" fill="#4a90e0"/><rect x="0.5" y="4.6" width="11" height="1" fill="#8e8e8e"/><rect x="2" y="7" width="2" height="1.2" fill="#ff6a13"/><rect x="5" y="7" width="2" height="1.2" fill="#777"/><rect x="8" y="7" width="2" height="1.2" fill="#ff6a13"/><rect x="2" y="9" width="2" height="1.2" fill="#666"/><rect x="5" y="9" width="2" height="1.2" fill="#666"/><rect x="8" y="9" width="2" height="1.2" fill="#4a90e0"/><rect x="2" y="11" width="2" height="1.2" fill="#666"/><rect x="5" y="11" width="2" height="1.2" fill="#666"/><rect x="0.5" y="13.2" width="11" height="1.3" fill="#8e8e8e"/><path d="M6.1 14.9 L6.9 12.2 L12.9 6.2 L14.8 8.1 L8.8 14.1 Z" fill="#f7a21b" stroke="#c9781a" stroke-width="0.5"/><path d="M7.6 12.4 L13.2 6.9" stroke="#ffd468" stroke-width="0.9"/><path d="M12.9 6.2 L14 5.1 Q14.9 4.4 15.7 5.2 Q16.4 6 15.8 7 L14.8 8.1 Z" fill="#e88ad2"/><path d="M12.5 6.6 L14.4 8.5" stroke="#b8b8b8" stroke-width="0.9"/><path d="M6.1 14.9 L6.7 12.8 L8.2 14.3 Z" fill="#ecd0a8"/><path d="M6.1 14.9 L6.35 14 L7 14.65Z" fill="#555"/></svg>
<div class="t" style="left:561.91px;top:250px;font-size:12px;line-height:16px;letter-spacing:-0.450px;font-weight:bold;">2:</div>
<div class="t" style="left:576.64px;top:250px;font-size:12px;line-height:16px;letter-spacing:-0.057px;">Level 2</div>
<div class="inp" style="left:680px;top:247px;width:104px;height:20px"></div>
<div class="t" style="left:733.93px;top:250px;font-size:12.6px;line-height:16px;letter-spacing:-0.187px;">0.00</div>
<svg class="a" style="left:765px;top:250px;" width="16" height="16" viewBox="0 0 16 16"><rect x="0.5" y="0.5" width="11" height="14" fill="#fff" stroke="#8e8e8e"/><rect x="1" y="1" width="10" height="3.6" fill="#8cc4f8"/><rect x="2" y="2.2" width="8" height="1.2" fill="#4a90e0"/><rect x="0.5" y="4.6" width="11" height="1" fill="#8e8e8e"/><rect x="2" y="7" width="2" height="1.2" fill="#ff6a13"/><rect x="5" y="7" width="2" height="1.2" fill="#777"/><rect x="8" y="7" width="2" height="1.2" fill="#ff6a13"/><rect x="2" y="9" width="2" height="1.2" fill="#666"/><rect x="5" y="9" width="2" height="1.2" fill="#666"/><rect x="8" y="9" width="2" height="1.2" fill="#4a90e0"/><rect x="2" y="11" width="2" height="1.2" fill="#666"/><rect x="5" y="11" width="2" height="1.2" fill="#666"/><rect x="0.5" y="13.2" width="11" height="1.3" fill="#8e8e8e"/><path d="M6.1 14.9 L6.9 12.2 L12.9 6.2 L14.8 8.1 L8.8 14.1 Z" fill="#f7a21b" stroke="#c9781a" stroke-width="0.5"/><path d="M7.6 12.4 L13.2 6.9" stroke="#ffd468" stroke-width="0.9"/><path d="M12.9 6.2 L14 5.1 Q14.9 4.4 15.7 5.2 Q16.4 6 15.8 7 L14.8 8.1 Z" fill="#e88ad2"/><path d="M12.5 6.6 L14.4 8.5" stroke="#b8b8b8" stroke-width="0.9"/><path d="M6.1 14.9 L6.7 12.8 L8.2 14.3 Z" fill="#ecd0a8"/><path d="M6.1 14.9 L6.35 14 L7 14.65Z" fill="#555"/></svg>
<div class="t" style="left:562.03px;top:274px;font-size:12px;line-height:16px;letter-spacing:-0.450px;font-weight:bold;">3:</div>
<div class="t" style="left:576.64px;top:274px;font-size:12px;line-height:16px;letter-spacing:-0.067px;">Level 3</div>
<div class="inp" style="left:680px;top:271px;width:104px;height:20px"></div>
<div class="t" style="left:733.93px;top:274px;font-size:12.6px;line-height:16px;letter-spacing:-0.187px;">0.00</div>
<svg class="a" style="left:765px;top:274px;" width="16" height="16" viewBox="0 0 16 16"><rect x="0.5" y="0.5" width="11" height="14" fill="#fff" stroke="#8e8e8e"/><rect x="1" y="1" width="10" height="3.6" fill="#8cc4f8"/><rect x="2" y="2.2" width="8" height="1.2" fill="#4a90e0"/><rect x="0.5" y="4.6" width="11" height="1" fill="#8e8e8e"/><rect x="2" y="7" width="2" height="1.2" fill="#ff6a13"/><rect x="5" y="7" width="2" height="1.2" fill="#777"/><rect x="8" y="7" width="2" height="1.2" fill="#ff6a13"/><rect x="2" y="9" width="2" height="1.2" fill="#666"/><rect x="5" y="9" width="2" height="1.2" fill="#666"/><rect x="8" y="9" width="2" height="1.2" fill="#4a90e0"/><rect x="2" y="11" width="2" height="1.2" fill="#666"/><rect x="5" y="11" width="2" height="1.2" fill="#666"/><rect x="0.5" y="13.2" width="11" height="1.3" fill="#8e8e8e"/><path d="M6.1 14.9 L6.9 12.2 L12.9 6.2 L14.8 8.1 L8.8 14.1 Z" fill="#f7a21b" stroke="#c9781a" stroke-width="0.5"/><path d="M7.6 12.4 L13.2 6.9" stroke="#ffd468" stroke-width="0.9"/><path d="M12.9 6.2 L14 5.1 Q14.9 4.4 15.7 5.2 Q16.4 6 15.8 7 L14.8 8.1 Z" fill="#e88ad2"/><path d="M12.5 6.6 L14.4 8.5" stroke="#b8b8b8" stroke-width="0.9"/><path d="M6.1 14.9 L6.7 12.8 L8.2 14.3 Z" fill="#ecd0a8"/><path d="M6.1 14.9 L6.35 14 L7 14.65Z" fill="#555"/></svg>
<div class="t" style="left:562.12px;top:298px;font-size:12px;line-height:16px;letter-spacing:-0.450px;font-weight:bold;">4:</div>
<div class="inp" style="left:680px;top:295px;width:104px;height:20px"></div>
<div class="t" style="left:733.93px;top:298px;font-size:12.6px;line-height:16px;letter-spacing:-0.187px;">0.00</div>
<svg class="a" style="left:765px;top:298px;" width="16" height="16" viewBox="0 0 16 16"><rect x="0.5" y="0.5" width="11" height="14" fill="#fff" stroke="#8e8e8e"/><rect x="1" y="1" width="10" height="3.6" fill="#8cc4f8"/><rect x="2" y="2.2" width="8" height="1.2" fill="#4a90e0"/><rect x="0.5" y="4.6" width="11" height="1" fill="#8e8e8e"/><rect x="2" y="7" width="2" height="1.2" fill="#ff6a13"/><rect x="5" y="7" width="2" height="1.2" fill="#777"/><rect x="8" y="7" width="2" height="1.2" fill="#ff6a13"/><rect x="2" y="9" width="2" height="1.2" fill="#666"/><rect x="5" y="9" width="2" height="1.2" fill="#666"/><rect x="8" y="9" width="2" height="1.2" fill="#4a90e0"/><rect x="2" y="11" width="2" height="1.2" fill="#666"/><rect x="5" y="11" width="2" height="1.2" fill="#666"/><rect x="0.5" y="13.2" width="11" height="1.3" fill="#8e8e8e"/><path d="M6.1 14.9 L6.9 12.2 L12.9 6.2 L14.8 8.1 L8.8 14.1 Z" fill="#f7a21b" stroke="#c9781a" stroke-width="0.5"/><path d="M7.6 12.4 L13.2 6.9" stroke="#ffd468" stroke-width="0.9"/><path d="M12.9 6.2 L14 5.1 Q14.9 4.4 15.7 5.2 Q16.4 6 15.8 7 L14.8 8.1 Z" fill="#e88ad2"/><path d="M12.5 6.6 L14.4 8.5" stroke="#b8b8b8" stroke-width="0.9"/><path d="M6.1 14.9 L6.7 12.8 L8.2 14.3 Z" fill="#ecd0a8"/><path d="M6.1 14.9 L6.35 14 L7 14.65Z" fill="#555"/></svg>
<div class="t" style="left:561.94px;top:322px;font-size:12px;line-height:16px;letter-spacing:-0.450px;font-weight:bold;">5:</div>
<div class="inp" style="left:680px;top:319px;width:104px;height:20px"></div>
<div class="t" style="left:733.93px;top:322px;font-size:12.6px;line-height:16px;letter-spacing:-0.187px;">0.00</div>
<svg class="a" style="left:765px;top:322px;" width="16" height="16" viewBox="0 0 16 16"><rect x="0.5" y="0.5" width="11" height="14" fill="#fff" stroke="#8e8e8e"/><rect x="1" y="1" width="10" height="3.6" fill="#8cc4f8"/><rect x="2" y="2.2" width="8" height="1.2" fill="#4a90e0"/><rect x="0.5" y="4.6" width="11" height="1" fill="#8e8e8e"/><rect x="2" y="7" width="2" height="1.2" fill="#ff6a13"/><rect x="5" y="7" width="2" height="1.2" fill="#777"/><rect x="8" y="7" width="2" height="1.2" fill="#ff6a13"/><rect x="2" y="9" width="2" height="1.2" fill="#666"/><rect x="5" y="9" width="2" height="1.2" fill="#666"/><rect x="8" y="9" width="2" height="1.2" fill="#4a90e0"/><rect x="2" y="11" width="2" height="1.2" fill="#666"/><rect x="5" y="11" width="2" height="1.2" fill="#666"/><rect x="0.5" y="13.2" width="11" height="1.3" fill="#8e8e8e"/><path d="M6.1 14.9 L6.9 12.2 L12.9 6.2 L14.8 8.1 L8.8 14.1 Z" fill="#f7a21b" stroke="#c9781a" stroke-width="0.5"/><path d="M7.6 12.4 L13.2 6.9" stroke="#ffd468" stroke-width="0.9"/><path d="M12.9 6.2 L14 5.1 Q14.9 4.4 15.7 5.2 Q16.4 6 15.8 7 L14.8 8.1 Z" fill="#e88ad2"/><path d="M12.5 6.6 L14.4 8.5" stroke="#b8b8b8" stroke-width="0.9"/><path d="M6.1 14.9 L6.7 12.8 L8.2 14.3 Z" fill="#ecd0a8"/><path d="M6.1 14.9 L6.35 14 L7 14.65Z" fill="#555"/></svg>
<div class="t" style="left:561.88px;top:346px;font-size:12px;line-height:16px;letter-spacing:-0.450px;font-weight:bold;">6:</div>
<div class="inp" style="left:680px;top:343px;width:104px;height:20px"></div>
<div class="t" style="left:733.93px;top:346px;font-size:12.6px;line-height:16px;letter-spacing:-0.187px;">0.00</div>
<svg class="a" style="left:765px;top:346px;" width="16" height="16" viewBox="0 0 16 16"><rect x="0.5" y="0.5" width="11" height="14" fill="#fff" stroke="#8e8e8e"/><rect x="1" y="1" width="10" height="3.6" fill="#8cc4f8"/><rect x="2" y="2.2" width="8" height="1.2" fill="#4a90e0"/><rect x="0.5" y="4.6" width="11" height="1" fill="#8e8e8e"/><rect x="2" y="7" width="2" height="1.2" fill="#ff6a13"/><rect x="5" y="7" width="2" height="1.2" fill="#777"/><rect x="8" y="7" width="2" height="1.2" fill="#ff6a13"/><rect x="2" y="9" width="2" height="1.2" fill="#666"/><rect x="5" y="9" width="2" height="1.2" fill="#666"/><rect x="8" y="9" width="2" height="1.2" fill="#4a90e0"/><rect x="2" y="11" width="2" height="1.2" fill="#666"/><rect x="5" y="11" width="2" height="1.2" fill="#666"/><rect x="0.5" y="13.2" width="11" height="1.3" fill="#8e8e8e"/><path d="M6.1 14.9 L6.9 12.2 L12.9 6.2 L14.8 8.1 L8.8 14.1 Z" fill="#f7a21b" stroke="#c9781a" stroke-width="0.5"/><path d="M7.6 12.4 L13.2 6.9" stroke="#ffd468" stroke-width="0.9"/><path d="M12.9 6.2 L14 5.1 Q14.9 4.4 15.7 5.2 Q16.4 6 15.8 7 L14.8 8.1 Z" fill="#e88ad2"/><path d="M12.5 6.6 L14.4 8.5" stroke="#b8b8b8" stroke-width="0.9"/><path d="M6.1 14.9 L6.7 12.8 L8.2 14.3 Z" fill="#ecd0a8"/><path d="M6.1 14.9 L6.35 14 L7 14.65Z" fill="#555"/></svg>
<div class="a" style="left:206px;top:408px;width:627px;height:130px;border:1px solid #fff;border-radius:3px"></div><div class="a" style="left:205px;top:407px;width:629px;height:130px;border:1px solid #a0a0a0;border-radius:3px"></div>
<div class="a" style="left:216px;top:401px;width:142px;height:14px;background:#e4ebf5"></div>
<div class="t" style="left:217.24px;top:400px;font-size:12.4px;line-height:16px;letter-spacing:-0.016px;color:#0046d5;">Selling Units of Measure:</div>
<div class="t" style="left:209.97px;top:418px;font-size:12px;line-height:16px;letter-spacing:-0.336px;font-weight:bold;">Sell Unit:</div>
<div class="inp" style="left:288px;top:415px;width:88px;height:20px"></div><div class="a" style="left:291px;top:418px;width:70px;height:16px;background:#fdf0dc"></div>
<div class="a" style="left:292px;top:418px;width:22px;height:15px;background:#0a6cd6"></div>
<div class="a" style="left:314px;top:418px;width:1px;height:15px;background:#ee8a1c"></div>
<div class="t" style="left:292.19px;top:418px;font-size:12.6px;line-height:16px;letter-spacing:-0.450px;color:#fff;">BX6</div>
<svg class="a" style="left:361px;top:418px;" width="16" height="16" viewBox="0 0 16 16"><radialGradient id="lg361418" cx="0.62" cy="0.68" r="0.75"><stop offset="0" stop-color="#b4e8fb"/><stop offset="1" stop-color="#48a4ee"/></radialGradient><path d="M10.8 11 L13.4 13.7" stroke="#e0901a" stroke-width="3.6" stroke-linecap="round"/><path d="M12 11.4 L13.6 13" stroke="#fbe0a8" stroke-width="1.1" stroke-linecap="round"/><circle cx="6.4" cy="6.7" r="5.85" fill="#fff" stroke="#8a8a8a" stroke-width="1.35"/><circle cx="6.4" cy="6.7" r="4.4" fill="url(#lg361418)"/></svg>
<div class="t" style="left:208.82px;top:442px;font-size:12px;line-height:16px;letter-spacing:-0.310px;font-weight:bold;">Conv Fact:</div>
<div class="inp" style="left:288px;top:439px;width:80px;height:20px"></div>
<div class="t" style="left:359.24px;top:442px;font-size:12.6px;line-height:16px;">6</div>
<div class="t" style="left:209.12px;top:466px;font-size:12px;line-height:16px;letter-spacing:-0.057px;font-weight:bold;">Barcode:</div>
<div class="inp" style="left:288px;top:463px;width:216px;height:20px"></div>
<div class="t" style="left:291.83px;top:466px;font-size:12.6px;line-height:16px;letter-spacing:0.045px;">9310159526100</div>
<div class="btn" style="left:209px;top:494px;width:86px;height:36px;"></div>
<svg class="a" style="left:216px;top:505.5px;" width="16" height="14" viewBox="0 0 16 14"><path d="M0.5 6.9 L3.1 4.3 L6 6.9 L12.9 0.5 L15.5 3 L6 13 Z" fill="#98cc0a" stroke="#4e8a00" stroke-width="1" stroke-linejoin="round"/><path d="M2 6.8 L3.2 5.7 L6 8.3 L12.9 2 L13.9 3" fill="none" stroke="#c8ea4a" stroke-width="1" stroke-linecap="round" stroke-linejoin="round"/></svg>
<div class="t" style="left:252.10px;top:497px;font-size:12px;line-height:16px;letter-spacing:-0.073px;">Add/</div>
<div class="t" style="left:243.70px;top:512px;font-size:12px;line-height:16px;letter-spacing:0.268px;">Update</div>
<div class="btn" style="left:305px;top:494px;width:86px;height:36px;"></div>
<svg class="a" style="left:314px;top:504px;" width="12" height="16" viewBox="0 0 12 16"><rect x="0.8" y="0.8" width="9.6" height="14.4" rx="1.6" fill="#e9e9e9" stroke="#858585" stroke-width="1.7"/><ellipse cx="5.6" cy="3" rx="4" ry="1.9" fill="#f6f6f6"/><path d="M1.4 6.2 Q5.6 3.6 9.8 6.2" stroke="#8e8e8e" stroke-width="1.1" fill="none"/><rect x="4.1" y="2.2" width="1" height="1" fill="#888"/><rect x="6.1" y="2.2" width="1" height="1" fill="#888"/><rect x="4" y="8" width="1.1" height="1.1" fill="#666"/><rect x="6" y="8" width="1.1" height="1.1" fill="#666"/><rect x="4" y="10" width="1.1" height="1.1" fill="#666"/><rect x="6" y="10" width="1.1" height="1.1" fill="#666"/><rect x="4" y="12" width="1.1" height="1.1" fill="#666"/><rect x="6" y="12" width="1.1" height="1.1" fill="#666"/><rect x="2" y="9" width="1" height="1" fill="#999"/><rect x="8" y="9" width="1" height="1" fill="#999"/><rect x="2" y="11" width="1" height="1" fill="#999"/><rect x="8" y="11" width="1" height="1" fill="#999"/></svg>
<div class="t" style="left:344.80px;top:505px;font-size:12px;line-height:16px;letter-spacing:0.425px;">Clear</div>
<div class="a" style="left:207px;top:459px;width:300px;height:32px;border:2px solid #ff0000"></div>
<div class="a" style="left:512px;top:409px;width:320px;height:126px;border:1px solid #7f9db9;background:#fff"></div>
<div class="a" style="left:513px;top:410px;width:318px;height:24px;background:linear-gradient(#e0e8f2,#d4e0ee 55%,#bccee4)"></div>
<div class="a" style="left:588px;top:410px;width:74px;height:24px;background:linear-gradient(#dfe8f4,#a9bcd6 55%,#768db0)"></div>
<div class="a" style="left:587px;top:410px;width:1px;height:24px;background:#1c2a44"></div>
<div class="a" style="left:662px;top:410px;width:1px;height:24px;background:#1c2a44"></div>
<div class="a" style="left:830px;top:410px;width:1px;height:24px;background:#1c2a44"></div>
<div class="t" style="left:516.35px;top:414px;font-size:12.6px;line-height:16px;letter-spacing:0.171px;">Unit</div>
<div class="t" style="left:604.37px;top:414px;font-size:12.6px;line-height:16px;letter-spacing:-0.279px;">Conv Fact</div>
<svg class="a" style="left:621.5px;top:410.6px;" width="8" height="5" viewBox="0 0 8 5"><path d="M0 4.4 L3.7 0.5 L7.4 4.4Z" fill="#000"/></svg>
<div class="t" style="left:665.99px;top:414px;font-size:12.6px;line-height:16px;letter-spacing:0.023px;">Barcode</div>
<div class="a" style="left:513px;top:434px;width:318px;height:16px;background:#c8c8c8"></div>
<div class="t" style="left:515.69px;top:434px;font-size:12.6px;line-height:16px;letter-spacing:-0.450px;">BX6</div>
<div class="t" style="left:654.04px;top:434px;font-size:12.6px;line-height:16px;">6</div>
<div class="t" style="left:665.63px;top:434px;font-size:12.6px;line-height:16px;letter-spacing:0.062px;">9310159526100</div>
<div class="a" style="left:1px;top:645px;width:880px;height:1px;background:#f2f5fa"></div>
<div class="a" style="left:1px;top:646px;width:880px;height:1px;background:#000"></div>
<div class="a" style="left:1px;top:647px;width:880px;height:26px;background:#f0f0f0"></div>
<div class="a" style="left:1px;top:672px;width:880px;height:1px;background:#fafafa"></div>
<div class="a" style="left:36px;top:649px;width:808px;height:23px;border-left:1px solid #a0a0a0;border-top:1px solid #a0a0a0;border-right:1px solid #fff"></div>
<svg class="a" style="left:869px;top:661px;" width="11" height="11" viewBox="0 0 11 11"><rect x="8" y="0" width="2" height="2" fill="#b8b8b8"/><rect x="4" y="4" width="2" height="2" fill="#b8b8b8"/><rect x="8" y="4" width="2" height="2" fill="#b8b8b8"/><rect x="0" y="8" width="2" height="2" fill="#b8b8b8"/><rect x="4" y="8" width="2" height="2" fill="#b8b8b8"/><rect x="8" y="8" width="2" height="2" fill="#b8b8b8"/></svg>
<div class="a" style="left:0;top:0;width:1px;height:674px;background:#6e6e6e"></div>
<div class="a" style="left:881px;top:0;width:1px;height:674px;background:#666"></div>
<div class="a" style="left:0;top:673px;width:882px;height:1px;background:#848484"></div>
</body></html>
